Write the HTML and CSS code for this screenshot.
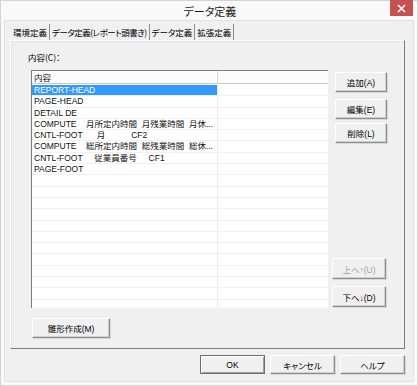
FILE: index.html
```html
<!DOCTYPE html>
<html lang="ja">
<head>
<meta charset="utf-8">
<link rel="stylesheet" href="styles.css">
</head>
<body>
<div class="window">
  <div class="titlebar">
    <span class="title">データ定義</span>
    <div class="close"><svg width="9" height="9" viewBox="0 0 9 9"><path d="M1 1L8 8M8 1L1 8" stroke="#fff" stroke-width="1.6"/></svg></div>
  </div>
  <div class="client">
    <div class="tabs">
      <div class="tab">環境定義</div>
      <div class="tab tight">データ定義(レポート頭書き)</div>
      <div class="tab">データ定義</div>
      <div class="tab active">拡張定義</div>
    </div>
    <div class="panel">
      <div class="label">内容(C)：</div>
      <div class="main">
        <div class="list">
          <div class="lhead"><div class="c1">内容</div><div class="c2"></div></div>
          <div class="lbody">
            <div class="row"><div class="c1 sel">REPORT-HEAD</div><div class="c2"></div></div>
            <div class="row"><div class="c1">PAGE-HEAD</div><div class="c2"></div></div>
            <div class="row"><div class="c1">DETAIL DE</div><div class="c2"></div></div>
            <div class="row"><div class="c1">COMPUTE    月所定内時間  月残業時間  月休...</div><div class="c2"></div></div>
            <div class="row"><div class="c1">CNTL-FOOT      月           CF2</div><div class="c2"></div></div>
            <div class="row"><div class="c1">COMPUTE    総所定内時間  総残業時間  総休...</div><div class="c2"></div></div>
            <div class="row"><div class="c1">CNTL-FOOT     従業員番号     CF1</div><div class="c2"></div></div>
            <div class="row"><div class="c1">PAGE-FOOT</div><div class="c2"></div></div>
            <div class="row"><div class="c1"></div><div class="c2"></div></div>
            <div class="row"><div class="c1"></div><div class="c2"></div></div>
            <div class="row"><div class="c1"></div><div class="c2"></div></div>
            <div class="row"><div class="c1"></div><div class="c2"></div></div>
            <div class="row"><div class="c1"></div><div class="c2"></div></div>
            <div class="row"><div class="c1"></div><div class="c2"></div></div>
            <div class="row"><div class="c1"></div><div class="c2"></div></div>
            <div class="row"><div class="c1"></div><div class="c2"></div></div>
            <div class="row"><div class="c1"></div><div class="c2"></div></div>
            <div class="row"><div class="c1"></div><div class="c2"></div></div>
            <div class="row"><div class="c1"></div><div class="c2"></div></div>
            <div class="row"><div class="c1"></div><div class="c2"></div></div>
          </div>
        </div>
        <div class="side">
          <div class="btn sbtn b-add">追加(A)</div>
          <div class="btn sbtn b-edit">編集(E)</div>
          <div class="btn sbtn b-del">削除(L)</div>
          <div class="spacer"></div>
          <div class="btn mbtn disabled">上へ↑(U)</div>
          <div class="btn mbtn b-down">下へ↓(D)</div>
        </div>
      </div>
      <div class="btn tmpl">雛形作成(M)</div>
    </div>
    <div class="footer">
      <div class="btn fbtn default">OK</div>
      <div class="btn fbtn">キャンセル</div>
      <div class="btn fbtn">ヘルプ</div>
    </div>
  </div>
</div>
</body>
</html>
```
FILE: styles.css
```css
* { box-sizing: border-box; }
html, body { margin: 0; padding: 0; }
body {
  width: 418px;
  height: 386px;
  overflow: hidden;
  background: #fafafa;
  font-family: "Liberation Sans", "Noto Sans CJK JP", sans-serif;
  font-size: 8.5px;
  color: #000;
  font-feature-settings: "palt";
}
.window {
  width: 418px;
  height: 386px;
  background: #f9f9f9;
  border: 1px solid #d4d4d4;
  display: flex;
  flex-direction: column;
}
.titlebar {
  height: 19px;
  flex: none;
  display: flex;
  align-items: center;
  justify-content: center;
  position: relative;
}
.title {
  font-family: "Noto Sans CJK JP", sans-serif;
  font-size: 11px;
  color: #1a1a1a;
  margin-left: 2px;
}
.close {
  position: absolute;
  top: -1px;
  right: 4px;
  width: 23px;
  height: 16px;
  background: #c75050;
  display: flex;
  align-items: center;
  justify-content: center;
}
.client {
  margin: 0 3px 3px 3px;
  flex: 1;
  background: #f0f0f0;
  border: 1px solid #e2e2e2;
  padding: 3px 8px 0 5px;
  display: flex;
  flex-direction: column;
}
.tabs {
  display: flex;
  height: 16px;
  padding-left: 1px;
  font-family: "Noto Sans CJK JP", sans-serif;
}
.tab {
  padding: 1px 2px 0 2px;
  line-height: 15px;
  border-right: 1px solid #8c8c8c;
  white-space: nowrap;
}
.tab.tight { letter-spacing: -0.5px; }
.tab.active { background: #f0f0f0; }
.panel {
  border: 1px solid;
  border-color: #ffffff #7c7c7c #7c7c7c #ffffff;
  box-shadow: inset 1px 1px 0 #e3e3e3;
  padding: 10px 0 9px 17px;
  height: 309px;
  display: flex;
  flex-direction: column;
  align-items: flex-start;
}
.label {
  height: 12px;
  line-height: 12px;
  margin-bottom: 7px;
  font-family: "Noto Sans CJK JP", sans-serif;
}
.main {
  display: flex;
  margin-left: 3px;
}
.list {
  width: 297px;
  height: 238px;
  background: #fff;
  border-top: 1px solid #7f7f7f;
  border-left: 1px solid #7f7f7f;
  overflow: hidden;
}
.lhead {
  display: flex;
  height: 13px;
  border-bottom: 1px solid #c8c8c8;
  background: #fcfcfc;
}
.lhead .c1 {
  width: 186px;
  line-height: 12px;
  padding-left: 2px;
  border-right: 1px solid #d8d8d8;
  font-family: "Noto Sans CJK JP", sans-serif;
}
.lbody { padding-top: 1px; }
.row {
  display: flex;
  height: 11.3px;
  border-bottom: 1px solid #f0f0f0;
}
.c1 {
  width: 186px;
  flex: none;
  padding-left: 2px;
  line-height: 10.5px;
  white-space: pre;
  overflow: hidden;
  border-right: 1px solid #ececec;
  color: #111;
}
.c1.sel {
  background: #3399ff;
  color: #fff;
}
.c2 { flex: 1; }
.side {
  display: flex;
  flex-direction: column;
  margin-left: 4px;
  height: 238px;
}
.btn {
  display: flex;
  align-items: center;
  justify-content: center;
  background: #f0f0f0;
  border: 1px solid;
  border-color: #ffffff #8e8e8e #8e8e8e #ffffff;
  box-shadow: inset -1px -1px 0 #cfcfcf, 1px 1px 0 #d8d8d8;
  font-family: "Liberation Sans", "Noto Sans CJK JP", sans-serif;
  white-space: nowrap;
}
.sbtn {
  width: 52px;
  height: 20px;
  margin-left: 3px;
}
.b-add { margin-top: 2px; }
.b-edit { margin-top: 7px; }
.b-del { margin-top: 4px; }
.spacer { flex: 1; }
.mbtn {
  width: 54px;
  height: 21px;
}
.b-down { margin-top: 7px; margin-bottom: 1px; }
.disabled { color: #a0a0a0; }
.tmpl {
  width: 78px;
  height: 20px;
  margin-top: 10px;
  margin-left: 4px;
}
.footer {
  display: flex;
  justify-content: flex-end;
  gap: 5px;
  padding-top: 6px;
}
.fbtn {
  width: 65px;
  height: 19px;
}
.fbtn.default {
  border-color: #6e6e6e;
  box-shadow: inset 1px 1px 0 #fff, inset -1px -1px 0 #a0a0a0;
}
```
